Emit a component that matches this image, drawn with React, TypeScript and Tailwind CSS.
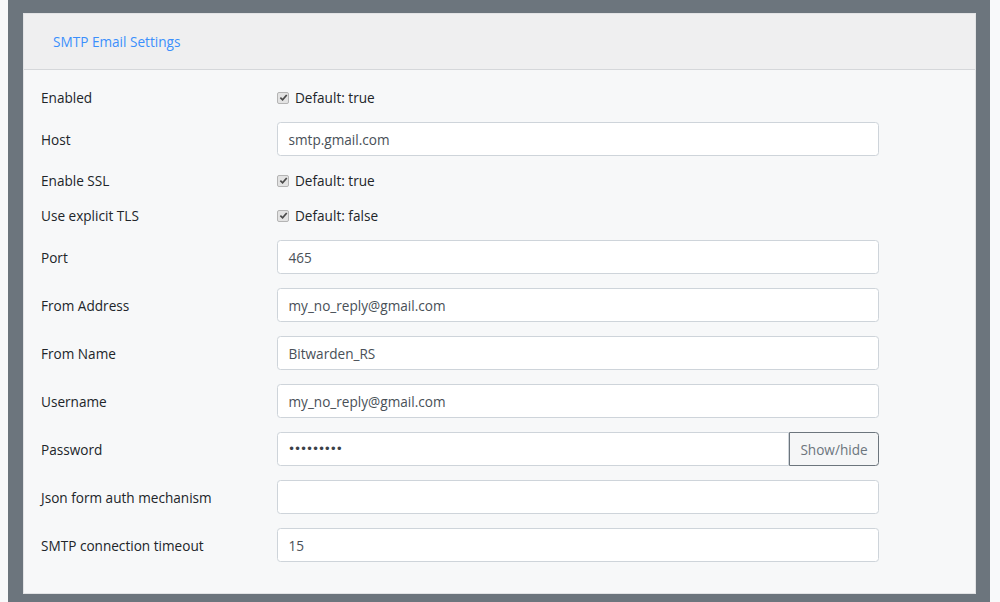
import React from "react";

type Field =
  | { label: string; kind: "check"; text: string }
  | { label: string; kind: "text"; value: string }
  | { label: string; kind: "password"; value: string };

const fields: Field[] = [
  { label: "Enabled", kind: "check", text: "Default: true" },
  { label: "Host", kind: "text", value: "smtp.gmail.com" },
  { label: "Enable SSL", kind: "check", text: "Default: true" },
  { label: "Use explicit TLS", kind: "check", text: "Default: false" },
  { label: "Port", kind: "text", value: "465" },
  { label: "From Address", kind: "text", value: "my_no_reply@gmail.com" },
  { label: "From Name", kind: "text", value: "Bitwarden_RS" },
  { label: "Username", kind: "text", value: "my_no_reply@gmail.com" },
  { label: "Password", kind: "password", value: "•••••••••" },
  { label: "Json form auth mechanism", kind: "text", value: "" },
  { label: "SMTP connection timeout", kind: "text", value: "15" },
];

function CheckBox() {
  return (
    <span className="flex h-[12px] w-[12px] items-center justify-center rounded-[2px] border border-[#b4b4b4] bg-[#e3e3e3]">
      <svg width="9" height="9" viewBox="0 0 10 10">
        <path d="M1.5 5.2 L4 7.6 L8.6 2.2" fill="none" stroke="#4a4a4a" strokeWidth="1.9" />
      </svg>
    </span>
  );
}

function Row({ field }: { field: Field }) {
  return (
    <div className="mb-[14px] flex items-center">
      <label className="w-[236px] shrink-0 text-[#212529]">{field.label}</label>
      {field.kind === "check" && (
        <div className="flex h-[21px] items-center gap-[6px]">
          <CheckBox />
          <span className="text-[#212529]">{field.text}</span>
        </div>
      )}
      {field.kind === "text" && (
        <div className="flex h-[34px] w-[602px] items-center rounded-[3.5px] border border-[#ced4da] bg-white px-[10.5px] text-[#495057]">
          {field.value}
        </div>
      )}
      {field.kind === "password" && (
        <div className="flex h-[34px] w-[602px]">
          <div className="flex flex-1 items-center rounded-l-[3.5px] border border-[#ced4da] bg-white pl-[10px] text-[12px] tracking-[-1.1px] text-[#3b4148] [font-family:'DejaVu_Sans',sans-serif]">
            {field.value}
          </div>
          <button className="flex w-[90px] items-center justify-center rounded-r-[3.5px] border border-[#6c757d] bg-[#f5f6f7] text-[#6c757d]">
            Show/hide
          </button>
        </div>
      )}
    </div>
  );
}

export default function App() {
  return (
    <div className="h-[602px] w-[1000px] overflow-hidden bg-[#f8f9fa] pl-[8px] pr-[10px] text-[13.6px] leading-[21px] [font-family:'Open_Sans',sans-serif]">
      <div className="h-full bg-[#6c757d] pt-[13px] pl-[15px] pr-[14px]">
        <div className="border border-[#e2e3e5] bg-[#f7f8f9]">
          <div className="flex h-[56px] items-center border-b border-[#d5d7da] bg-[#efeff0] px-[29px]">
            <span className="text-[#3b8ffc]">SMTP Email Settings</span>
          </div>
          <div className="px-[17px] pt-[17px] pb-[17px]">
            {fields.map((f, i) => (
              <Row key={i} field={f} />
            ))}
          </div>
        </div>
      </div>
    </div>
  );
}
